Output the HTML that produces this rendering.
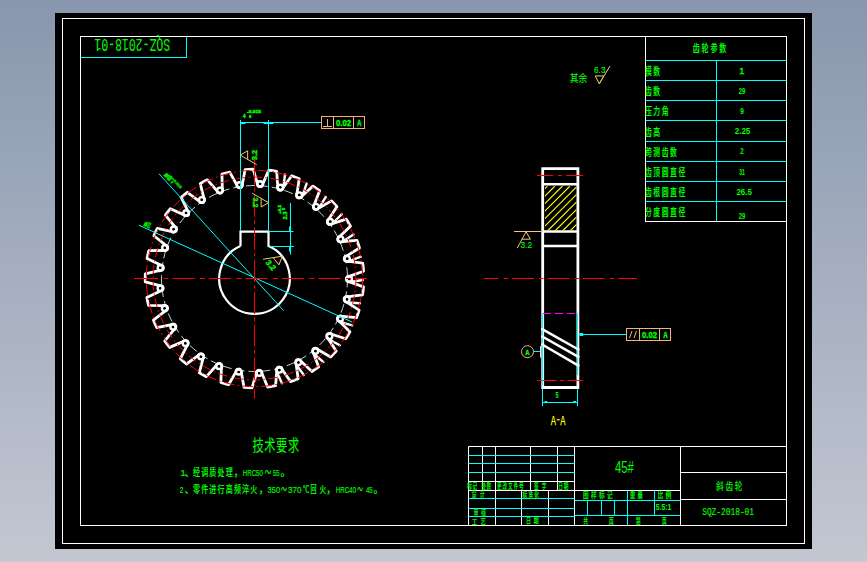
<!DOCTYPE html>
<html lang="zh"><head><meta charset="utf-8"><title>斜齿轮 SQZ-2018-01</title>
<style>html,body{margin:0;padding:0;background:#a5aec2}body{width:867px;height:562px;overflow:hidden}svg{display:block}text{font-family:"Liberation Sans","Noto Sans CJK SC",sans-serif;white-space:pre}text.m{font-family:"Liberation Mono","Noto Sans CJK SC",monospace}</style></head>
<body>
<svg width="867" height="562" viewBox="0 0 867 562">
<defs><linearGradient id="bg" x1="0" y1="0" x2="0" y2="1"><stop offset="0" stop-color="#8897ae"/><stop offset="1" stop-color="#c3c7d2"/></linearGradient></defs>
<rect width="867" height="562" fill="url(#bg)"/>
<rect x="55" y="13" width="757" height="536" fill="#000"/>
<rect x="62.5" y="18.5" width="742" height="525" fill="none" stroke="#fff" stroke-width="1"/>
<rect x="80.5" y="36.5" width="706" height="489" fill="none" stroke="#fff" stroke-width="1"/>
<line x1="81.00" y1="57.50" x2="187.00" y2="57.50" stroke="#00ffff" stroke-width="1" />
<line x1="186.50" y1="36.50" x2="186.50" y2="57.80" stroke="#00ffff" stroke-width="1" />
<text font-size="17.5" fill="#00ff00" font-weight="400" class="m" transform="translate(170.20,39.20) rotate(180) scale(0.657,1)">SQZ-2018-01</text>
<path d="M253.19,169.21 L257.10,182.54 A3.1,4.2 3.4 0 0 263.28,182.90 L268.75,170.13 A109.3,109.3 0 0 1 276.71,171.48 L277.67,185.34 A3.1,4.2 15.8 0 0 283.63,187.03 L291.71,175.73 A109.3,109.3 0 0 1 299.20,178.76 L297.15,192.49 A3.1,4.2 28.2 0 0 302.61,195.43 L312.93,186.13 A109.3,109.3 0 0 1 319.59,190.70 L314.64,203.67 A3.1,4.2 40.6 0 0 319.35,207.71 L331.42,200.85 A109.3,109.3 0 0 1 336.95,206.74 L329.32,218.35 A3.1,4.2 53.1 0 0 333.05,223.31 L346.32,219.20 A109.3,109.3 0 0 1 350.45,226.15 L340.50,235.84 A3.1,4.2 65.5 0 0 343.08,241.48 L356.92,240.33 A109.3,109.3 0 0 1 359.46,248.00 L347.66,255.33 A3.1,4.2 77.9 0 0 348.96,261.39 L362.73,263.23 A109.3,109.3 0 0 1 363.56,271.27 L350.46,275.90 A3.1,4.2 90.3 0 0 350.43,282.10 L363.48,286.86 A109.3,109.3 0 0 1 362.56,294.88 L348.78,296.59 A3.1,4.2 102.7 0 0 347.42,302.63 L359.14,310.09 A109.3,109.3 0 0 1 356.52,317.73 L342.69,316.43 A3.1,4.2 115.1 0 0 340.06,322.04 L349.90,331.84 A109.3,109.3 0 0 1 345.70,338.75 L332.47,334.50 A3.1,4.2 127.5 0 0 328.70,339.42 L336.20,351.11 A109.3,109.3 0 0 1 330.61,356.94 L318.61,349.96 A3.1,4.2 140.0 0 0 313.86,353.94 L318.68,366.97 A109.3,109.3 0 0 1 311.97,371.47 L301.75,362.07 A3.1,4.2 152.4 0 0 296.26,364.94 L298.16,378.70 A109.3,109.3 0 0 1 290.64,381.65 L282.68,370.27 A3.1,4.2 164.8 0 0 276.70,371.90 L275.60,385.74 A109.3,109.3 0 0 1 267.62,387.01 L262.29,374.18 A3.1,4.2 177.2 0 0 256.10,374.49 L252.05,387.77 A109.3,109.3 0 0 1 243.99,387.29 L241.54,373.62 A3.1,4.2 189.6 0 0 235.43,372.59 L228.62,384.69 A109.3,109.3 0 0 1 220.85,382.49 L221.40,368.61 A3.1,4.2 202.0 0 0 215.65,366.29 L206.40,376.65 A109.3,109.3 0 0 1 199.28,372.83 L202.80,359.39 A3.1,4.2 214.4 0 0 197.69,355.88 L186.42,364.01 A109.3,109.3 0 0 1 180.29,358.75 L186.62,346.38 A3.1,4.2 226.8 0 0 182.38,341.86 L169.63,347.38 A109.3,109.3 0 0 1 164.78,340.92 L173.61,330.21 A3.1,4.2 239.3 0 0 170.45,324.88 L156.81,327.52 A109.3,109.3 0 0 1 153.46,320.17 L164.39,311.61 A3.1,4.2 251.7 0 0 162.44,305.72 L148.56,305.38 A109.3,109.3 0 0 1 146.86,297.48 L159.38,291.46 A3.1,4.2 264.1 0 0 158.74,285.30 L145.26,281.97 A109.3,109.3 0 0 1 145.30,273.90 L158.82,270.71 A3.1,4.2 276.5 0 0 159.52,264.55 L147.06,258.41 A109.3,109.3 0 0 1 148.84,250.53 L162.73,250.32 A3.1,4.2 288.9 0 0 164.74,244.46 L153.89,235.78 A109.3,109.3 0 0 1 157.32,228.47 L170.93,231.26 A3.1,4.2 301.3 0 0 174.15,225.96 L165.43,215.15 A109.3,109.3 0 0 1 170.35,208.75 L183.04,214.39 A3.1,4.2 313.7 0 0 187.33,209.92 L181.13,197.49 A109.3,109.3 0 0 1 187.31,192.29 L198.49,200.53 A3.1,4.2 326.2 0 0 203.64,197.08 L200.26,183.61 A109.3,109.3 0 0 1 207.42,179.86 L216.56,190.31 A3.1,4.2 338.6 0 0 222.33,188.05 L221.93,174.17 A109.3,109.3 0 0 1 229.72,172.05 L236.41,184.22 A3.1,4.2 351.0 0 0 242.53,183.25 L245.12,169.60 A109.3,109.3 0 0 1 253.19,169.21Z" fill="none" stroke="#fff" stroke-width="2.8" stroke-linejoin="round"/>
<path d="M257.31,184.07 a2.8,2.8 0 1 0 5.6,0 a2.8,2.8 0 1 0 -5.6,0 M277.48,187.48 a2.8,2.8 0 1 0 5.6,0 a2.8,2.8 0 1 0 -5.6,0 M283.48,187.19 L284.97,174.58 M296.44,195.15 a2.8,2.8 0 1 0 5.6,0 a2.8,2.8 0 1 0 -5.6,0 M302.43,195.55 L306.60,183.56 M313.32,206.72 a2.8,2.8 0 1 0 5.6,0 a2.8,2.8 0 1 0 -5.6,0 M319.14,207.80 L325.79,196.98 M327.31,221.64 a2.8,2.8 0 1 0 5.6,0 a2.8,2.8 0 1 0 -5.6,0 M332.83,223.35 L341.65,214.21 M337.76,239.22 a2.8,2.8 0 1 0 5.6,0 a2.8,2.8 0 1 0 -5.6,0 M342.86,241.47 L353.44,234.45 M344.19,258.64 a2.8,2.8 0 1 0 5.6,0 a2.8,2.8 0 1 0 -5.6,0 M348.75,261.33 L360.59,256.75 M346.30,278.99 a2.8,2.8 0 1 0 5.6,0 a2.8,2.8 0 1 0 -5.6,0 M350.24,282.00 L362.79,280.06 M343.98,299.31 a2.8,2.8 0 1 0 5.6,0 a2.8,2.8 0 1 0 -5.6,0 M347.25,302.49 L359.92,303.30 M337.35,318.67 a2.8,2.8 0 1 0 5.6,0 a2.8,2.8 0 1 0 -5.6,0 M339.92,321.87 L352.12,325.39 M326.71,336.14 a2.8,2.8 0 1 0 5.6,0 a2.8,2.8 0 1 0 -5.6,0 M328.60,339.22 L339.76,345.28 M312.57,350.92 a2.8,2.8 0 1 0 5.6,0 a2.8,2.8 0 1 0 -5.6,0 M313.81,353.73 L323.42,362.04 M295.58,362.31 a2.8,2.8 0 1 0 5.6,0 a2.8,2.8 0 1 0 -5.6,0 M296.26,364.72 L303.84,374.91 M276.54,369.78 a2.8,2.8 0 1 0 5.6,0 a2.8,2.8 0 1 0 -5.6,0 M276.74,371.68 L281.97,383.26 M256.33,372.99 a2.8,2.8 0 1 0 5.6,0 a2.8,2.8 0 1 0 -5.6,0 M235.91,371.77 a2.8,2.8 0 1 0 5.6,0 a2.8,2.8 0 1 0 -5.6,0 M216.23,366.20 a2.8,2.8 0 1 0 5.6,0 a2.8,2.8 0 1 0 -5.6,0 M198.21,356.52 a2.8,2.8 0 1 0 5.6,0 a2.8,2.8 0 1 0 -5.6,0 M182.69,343.20 a2.8,2.8 0 1 0 5.6,0 a2.8,2.8 0 1 0 -5.6,0 M170.39,326.85 a2.8,2.8 0 1 0 5.6,0 a2.8,2.8 0 1 0 -5.6,0 M161.90,308.24 a2.8,2.8 0 1 0 5.6,0 a2.8,2.8 0 1 0 -5.6,0 M157.60,288.24 a2.8,2.8 0 1 0 5.6,0 a2.8,2.8 0 1 0 -5.6,0 M157.71,267.79 a2.8,2.8 0 1 0 5.6,0 a2.8,2.8 0 1 0 -5.6,0 M162.21,247.83 a2.8,2.8 0 1 0 5.6,0 a2.8,2.8 0 1 0 -5.6,0 M170.89,229.31 a2.8,2.8 0 1 0 5.6,0 a2.8,2.8 0 1 0 -5.6,0 M183.36,213.09 a2.8,2.8 0 1 0 5.6,0 a2.8,2.8 0 1 0 -5.6,0 M199.02,199.93 a2.8,2.8 0 1 0 5.6,0 a2.8,2.8 0 1 0 -5.6,0 M217.14,190.44 a2.8,2.8 0 1 0 5.6,0 a2.8,2.8 0 1 0 -5.6,0 M236.88,185.07 a2.8,2.8 0 1 0 5.6,0 a2.8,2.8 0 1 0 -5.6,0" fill="none" stroke="#fff" stroke-width="2.4" stroke-linecap="round"/>
<circle cx="254.5" cy="278.5" r="93" fill="none" stroke="#fff" stroke-width="0.9" stroke-dasharray="9 4" opacity="0.9"/>
<circle cx="254.5" cy="278.5" r="108.2" fill="none" stroke="#ff0000" stroke-width="1" stroke-dasharray="11 3 2 3"/>
<circle cx="254.5" cy="278.5" r="101.4" fill="none" stroke="#ff0000" stroke-width="1" stroke-dasharray="9 3 2 3"/>
<path d="M240.50,246.09 L240.50,231.6 L268.50,231.6 L268.50,246.09 A35.3,35.3 0 1 1 240.50,246.09" fill="none" stroke="#fff" stroke-width="2.2" stroke-linejoin="miter"/>
<line x1="159.00" y1="173.80" x2="283.50" y2="310.50" stroke="#00ffff" stroke-width="1" />
<line x1="138.80" y1="225.20" x2="352.00" y2="322.00" stroke="#00ffff" stroke-width="1" />
<line x1="134.00" y1="278.50" x2="137.00" y2="278.50" stroke="#ff0000" stroke-width="1" />
<line x1="136.00" y1="278.50" x2="367.00" y2="278.50" stroke="#ff0000" stroke-width="1" stroke-dasharray="22 5.5 5 4"/>
<line x1="254.50" y1="159.30" x2="254.50" y2="163.00" stroke="#ff0000" stroke-width="1" />
<line x1="254.50" y1="162.60" x2="254.50" y2="398.50" stroke="#ff0000" stroke-width="1" stroke-dasharray="22 3.3 3.8 3.3"/>
<line x1="240.50" y1="120.00" x2="240.50" y2="231.00" stroke="#00ffff" stroke-width="1" />
<line x1="268.50" y1="120.00" x2="268.50" y2="231.00" stroke="#00ffff" stroke-width="1" />
<line x1="240.50" y1="122.50" x2="321.00" y2="122.50" stroke="#00ffff" stroke-width="1" />
<line x1="241.00" y1="123.50" x2="245.50" y2="123.50" stroke="#00ffff" stroke-width="1" />
<line x1="263.50" y1="123.50" x2="268.00" y2="123.50" stroke="#00ffff" stroke-width="1" />
<line x1="269.00" y1="123.50" x2="273.50" y2="123.50" stroke="#00ffff" stroke-width="1" />
<text x="243.00" y="118.30" font-size="4.5" fill="#00ff00" font-weight="700" stroke="#00ff00" stroke-width="0.35" >4</text>
<text x="249.00" y="118.30" font-size="4" fill="#00ff00" font-weight="700" stroke="#00ff00" stroke-width="0.35" >0</text>
<text x="247.00" y="113.20" font-size="4" fill="#00ff00" font-weight="700" textLength="14.00" lengthAdjust="spacingAndGlyphs" stroke="#00ff00" stroke-width="0.35" >-0.015</text>
<rect x="321.5" y="116.5" width="43" height="12" fill="none" stroke="#f0b478" stroke-width="1"/>
<line x1="333.50" y1="116.50" x2="333.50" y2="128.50" stroke="#f0b478" stroke-width="1" />
<line x1="353.50" y1="116.50" x2="353.50" y2="128.50" stroke="#f0b478" stroke-width="1" />
<line x1="327.50" y1="119.00" x2="327.50" y2="126.50" stroke="#f0b478" stroke-width="1" />
<line x1="323.00" y1="126.50" x2="332.00" y2="126.50" stroke="#f0b478" stroke-width="1" />
<text x="336.00" y="126.00" font-size="8.5" fill="#00ff00" font-weight="700" textLength="15.00" lengthAdjust="spacingAndGlyphs" stroke="#00ff00" stroke-width="0.35" >0.02</text>
<text x="357.00" y="126.00" font-size="8.5" fill="#00ff00" font-weight="700" textLength="4.50" lengthAdjust="spacingAndGlyphs" stroke="#00ff00" stroke-width="0.35" >A</text>
<path d="M247.65,150.80 L240.20,155.10 L256.65,164.60 M247.65,150.80 L247.65,159.40" fill="none" stroke="#f0c878" stroke-width="1"/>
<text x="0.00" y="0.00" font-size="8" fill="#00ff00" font-weight="700" textLength="10.50" lengthAdjust="spacingAndGlyphs" transform="translate(257,160.3) rotate(-90)" stroke="#00ff00" stroke-width="0.35" >3.2</text>
<path d="M261.15,207.00 L268.60,202.70 L252.15,193.20 M261.15,207.00 L261.15,198.40" fill="none" stroke="#f0c878" stroke-width="1"/>
<text x="0.00" y="0.00" font-size="8" fill="#00ff00" font-weight="700" textLength="10.00" lengthAdjust="spacingAndGlyphs" transform="translate(252.6,197.5) rotate(90)" stroke="#00ff00" stroke-width="0.35" >3.2</text>
<path d="M278.97,264.88 L282.30,256.20 L263.04,259.25 M278.97,264.88 L273.11,257.65" fill="none" stroke="#f0c878" stroke-width="1"/>
<text x="0.00" y="0.00" font-size="8" fill="#00ff00" font-weight="700" textLength="11.00" lengthAdjust="spacingAndGlyphs" transform="translate(265.3,262.8) rotate(50)" stroke="#00ff00" stroke-width="0.35" >3.2</text>
<line x1="290.50" y1="203.00" x2="290.50" y2="254.60" stroke="#00ffff" stroke-width="1" />
<line x1="268.50" y1="231.50" x2="293.50" y2="231.50" stroke="#00ffff" stroke-width="1" />
<line x1="269.50" y1="246.50" x2="294.00" y2="246.50" stroke="#00ffff" stroke-width="1" />
<line x1="289.50" y1="226.50" x2="289.50" y2="231.00" stroke="#00ffff" stroke-width="1" />
<line x1="289.50" y1="247.00" x2="289.50" y2="251.50" stroke="#00ffff" stroke-width="1" />
<text x="0.00" y="0.00" font-size="5" fill="#00ff00" font-weight="700" textLength="8.00" lengthAdjust="spacingAndGlyphs" transform="translate(286.5,219.5) rotate(-90)" stroke="#00ff00" stroke-width="0.35" >2.3</text>
<text x="0.00" y="0.00" font-size="4" fill="#00ff00" font-weight="700" textLength="9.00" lengthAdjust="spacingAndGlyphs" transform="translate(280.5,214) rotate(-90)" stroke="#00ff00" stroke-width="0.35" >+0.1</text>
<text x="0.00" y="0.00" font-size="4" fill="#00ff00" font-weight="700" transform="translate(285,210) rotate(-90)" stroke="#00ff00" stroke-width="0.35" >0</text>
<text x="0.00" y="0.00" font-size="7.5" fill="#00ff00" font-weight="700" textLength="8.50" lengthAdjust="spacingAndGlyphs" transform="translate(163.4,175.3) rotate(47.7)" stroke="#00ff00" stroke-width="0.35" >ø8</text>
<text x="0.00" y="0.00" font-size="3.6" fill="#00ff00" font-weight="700" textLength="13.00" lengthAdjust="spacingAndGlyphs" transform="translate(171.5,179.2) rotate(47.7)" stroke="#00ff00" stroke-width="0.2" >+0.015</text>
<text x="0.00" y="0.00" font-size="3.6" fill="#00ff00" font-weight="700" transform="translate(170.3,182.6) rotate(47.7)" stroke="#00ff00" stroke-width="0.2" >0</text>
<text x="0.00" y="0.00" font-size="8" fill="#00ff00" font-weight="700" textLength="3.60" lengthAdjust="spacingAndGlyphs" transform="translate(143.3,225.6) rotate(24.4)" stroke="#00ff00" stroke-width="0.35" >ø</text>
<text x="0.00" y="0.00" font-size="8" fill="#00ff00" font-weight="700" textLength="3.20" lengthAdjust="spacingAndGlyphs" transform="translate(146.5,227) rotate(24.4)" stroke="#00ff00" stroke-width="0.35" >31</text>
<path d="M542.7,387.5 L542.7,168.7 L577.9,168.7 L577.9,387.5 Z" fill="none" stroke="#fff" stroke-width="2.8"/>
<line x1="543.00" y1="184.20" x2="578.00" y2="184.20" stroke="#fff" stroke-width="2.5" />
<line x1="543.00" y1="231.60" x2="578.00" y2="231.60" stroke="#fff" stroke-width="2.5" />
<line x1="543.00" y1="245.90" x2="578.00" y2="245.90" stroke="#fff" stroke-width="2.5" />
<clipPath id="hc"><rect x="545" y="186.3" width="31.5" height="44.2"/></clipPath>
<path d="M495.0,231 L540.0,186 M502.5,231 L547.5,186 M510.0,231 L555.0,186 M517.5,231 L562.5,186 M525.0,231 L570.0,186 M532.5,231 L577.5,186 M540.0,231 L585.0,186 M547.5,231 L592.5,186 M555.0,231 L600.0,186 M562.5,231 L607.5,186 M570.0,231 L615.0,186 M577.5,231 L622.5,186" stroke="#ffff00" stroke-width="1.2" clip-path="url(#hc)" fill="none"/>
<line x1="537.00" y1="175.50" x2="583.20" y2="175.50" stroke="#ff0000" stroke-width="1" stroke-dasharray="16 5 4 4.2 17"/>
<line x1="483.70" y1="278.50" x2="637.00" y2="278.50" stroke="#ff0000" stroke-width="1" stroke-dasharray="22 5 4.4 4" stroke-dashoffset="7"/>
<line x1="536.80" y1="380.50" x2="583.30" y2="380.50" stroke="#ff0000" stroke-width="1" stroke-dasharray="20 3.3 4 3.3 16"/>
<line x1="543.00" y1="313.50" x2="578.00" y2="313.50" stroke="#ff00ff" stroke-width="1" stroke-dasharray="8 4"/>
<line x1="542.50" y1="313.50" x2="542.50" y2="385.00" stroke="#00ffff" stroke-width="1" />
<line x1="577.50" y1="313.50" x2="577.50" y2="375.00" stroke="#00ffff" stroke-width="1" />
<line x1="577.50" y1="389.00" x2="577.50" y2="406.00" stroke="#00ffff" stroke-width="1" />
<line x1="542.50" y1="389.00" x2="542.50" y2="406.00" stroke="#00ffff" stroke-width="1" />
<line x1="541.30" y1="328.60" x2="579.30" y2="350.00" stroke="#fff" stroke-width="2.5" />
<line x1="541.30" y1="336.00" x2="579.30" y2="357.40" stroke="#fff" stroke-width="2.5" />
<line x1="541.30" y1="344.00" x2="579.30" y2="366.20" stroke="#fff" stroke-width="2.5" />
<line x1="542.50" y1="402.50" x2="577.50" y2="402.50" stroke="#00ffff" stroke-width="1" />
<line x1="544.50" y1="401.50" x2="547.20" y2="401.50" stroke="#00ffff" stroke-width="1" />
<line x1="573.00" y1="401.50" x2="576.00" y2="401.50" stroke="#00ffff" stroke-width="1" />
<text x="555.60" y="398.00" font-size="8.2" fill="#00ff00" font-weight="700" textLength="3.00" lengthAdjust="spacingAndGlyphs" >5</text>
<text x="550.70" y="424.60" font-size="13" fill="#ffff00" font-weight="400" textLength="5.20" lengthAdjust="spacingAndGlyphs" stroke="#ffff00" stroke-width="0.25" >A</text>
<text x="556.60" y="423.20" font-size="13" fill="#ffff00" font-weight="400" textLength="3.20" lengthAdjust="spacingAndGlyphs" stroke="#ffff00" stroke-width="0.25" >-</text>
<text x="560.20" y="424.60" font-size="13" fill="#ffff00" font-weight="400" textLength="5.20" lengthAdjust="spacingAndGlyphs" stroke="#ffff00" stroke-width="0.25" >A</text>
<line x1="514.00" y1="231.50" x2="543.00" y2="231.50" stroke="#f0c878" stroke-width="1" />
<path d="M526,231.8 L530.4,239.2 L521.7,239.2 M526,231.8 L517.3,248" fill="none" stroke="#f0c878" stroke-width="1"/>
<text x="520.50" y="248.00" font-size="9" fill="#00ff00" font-weight="400" textLength="11.50" lengthAdjust="spacingAndGlyphs" stroke="#00ff00" stroke-width="0.1" >3.2</text>
<circle cx="527.5" cy="351.7" r="6" fill="none" stroke="#f0b478" stroke-width="1"/>
<line x1="533.50" y1="351.50" x2="540.00" y2="351.50" stroke="#00ffff" stroke-width="1" />
<line x1="540.50" y1="346.00" x2="540.50" y2="357.70" stroke="#e4e4e4" stroke-width="1" />
<text x="525.30" y="354.80" font-size="7.5" fill="#00ff00" font-weight="700" textLength="4.20" lengthAdjust="spacingAndGlyphs" stroke="#00ff00" stroke-width="0.35" >A</text>
<rect x="626.5" y="328.5" width="44" height="12" fill="none" stroke="#f0b478" stroke-width="1"/>
<line x1="639.50" y1="328.50" x2="639.50" y2="340.50" stroke="#f0b478" stroke-width="1" />
<line x1="659.50" y1="328.50" x2="659.50" y2="340.50" stroke="#f0b478" stroke-width="1" />
<line x1="629.50" y1="338.00" x2="632.00" y2="331.00" stroke="#f0b478" stroke-width="1" />
<line x1="634.00" y1="338.00" x2="636.50" y2="331.00" stroke="#f0b478" stroke-width="1" />
<text x="642.00" y="338.00" font-size="8.5" fill="#00ff00" font-weight="700" textLength="15.00" lengthAdjust="spacingAndGlyphs" stroke="#00ff00" stroke-width="0.35" >0.02</text>
<text x="663.20" y="338.00" font-size="8.5" fill="#00ff00" font-weight="700" textLength="4.50" lengthAdjust="spacingAndGlyphs" stroke="#00ff00" stroke-width="0.35" >A</text>
<line x1="579.00" y1="334.50" x2="626.30" y2="334.50" stroke="#00ffff" stroke-width="1" />
<rect x="579.6" y="333" width="3.6" height="3" fill="#00ffff"/>
<text x="569.80" y="82.00" font-size="10.5" fill="#00ff00" font-weight="400" textLength="17.60" lengthAdjust="spacingAndGlyphs" stroke="#00ff00" stroke-width="0.1" >其余</text>
<text x="594.00" y="72.80" font-size="9" fill="#00ff00" font-weight="400" textLength="11.50" lengthAdjust="spacingAndGlyphs" stroke="#00ff00" stroke-width="0.1" >6.3</text>
<path d="M595.2,75.9 L603.8,75.9 L599.3,83.7 L595.2,75.9 M599.3,83.7 L610,66" fill="none" stroke="#f0c878" stroke-width="1"/>
<line x1="645.50" y1="36.50" x2="645.50" y2="221.50" stroke="#fff" stroke-width="1" />
<line x1="645.00" y1="221.50" x2="786.50" y2="221.50" stroke="#fff" stroke-width="1" />
<line x1="645.40" y1="60.50" x2="786.50" y2="60.50" stroke="#00ffff" stroke-width="1" />
<line x1="645.40" y1="80.50" x2="786.50" y2="80.50" stroke="#00ffff" stroke-width="1" />
<line x1="645.40" y1="100.50" x2="786.50" y2="100.50" stroke="#00ffff" stroke-width="1" />
<line x1="645.40" y1="120.50" x2="786.50" y2="120.50" stroke="#00ffff" stroke-width="1" />
<line x1="645.40" y1="141.50" x2="786.50" y2="141.50" stroke="#00ffff" stroke-width="1" />
<line x1="645.40" y1="161.50" x2="786.50" y2="161.50" stroke="#00ffff" stroke-width="1" />
<line x1="645.40" y1="181.50" x2="786.50" y2="181.50" stroke="#00ffff" stroke-width="1" />
<line x1="645.40" y1="201.50" x2="786.50" y2="201.50" stroke="#00ffff" stroke-width="1" />
<line x1="716.50" y1="60.70" x2="716.50" y2="221.50" stroke="#00ffff" stroke-width="1" />
<text font-size="10.5" fill="#00ff00" font-weight="500" letter-spacing="2.70" transform="translate(692.80,51.80) scale(0.667,1)" stroke="#00ff00" stroke-width="0.2">齿轮参数</text>
<text font-size="10.8" fill="#00ff00" font-weight="500" letter-spacing="2.46" transform="translate(645.00,75.00) scale(0.630,1)" stroke="#00ff00" stroke-width="0.2">模数</text>
<text x="739.30" y="73.80" font-size="9.2" fill="#00ff00" font-weight="400" stroke="#00ff00" stroke-width="0.35" >1</text>
<text font-size="10.8" fill="#00ff00" font-weight="500" letter-spacing="2.46" transform="translate(645.00,94.80) scale(0.630,1)" stroke="#00ff00" stroke-width="0.2">齿数</text>
<text x="738.70" y="94.00" font-size="9.2" fill="#00ff00" font-weight="700" textLength="6.60" lengthAdjust="spacingAndGlyphs" >29</text>
<text font-size="10.8" fill="#00ff00" font-weight="500" letter-spacing="2.46" transform="translate(645.00,114.80) scale(0.630,1)" stroke="#00ff00" stroke-width="0.2">压力角</text>
<text x="740.20" y="114.00" font-size="9.2" fill="#00ff00" font-weight="700" textLength="3.60" lengthAdjust="spacingAndGlyphs" >9</text>
<text font-size="10.8" fill="#00ff00" font-weight="500" letter-spacing="2.46" transform="translate(645.00,135.80) scale(0.630,1)" stroke="#00ff00" stroke-width="0.2">齿高</text>
<text x="734.75" y="134.20" font-size="9.2" fill="#00ff00" font-weight="700" textLength="15.50" lengthAdjust="spacingAndGlyphs" >2.25</text>
<text font-size="10.8" fill="#00ff00" font-weight="500" letter-spacing="2.46" transform="translate(645.00,155.80) scale(0.630,1)" stroke="#00ff00" stroke-width="0.2">跨测齿数</text>
<text x="740.30" y="153.50" font-size="9.2" fill="#00ff00" font-weight="700" textLength="3.40" lengthAdjust="spacingAndGlyphs" >2</text>
<text font-size="10.8" fill="#00ff00" font-weight="500" letter-spacing="2.46" transform="translate(645.00,176.30) scale(0.630,1)" stroke="#00ff00" stroke-width="0.2">齿顶圆直径</text>
<text x="739.20" y="174.60" font-size="9.2" fill="#00ff00" font-weight="700" textLength="5.60" lengthAdjust="spacingAndGlyphs" >31</text>
<text font-size="10.8" fill="#00ff00" font-weight="500" letter-spacing="2.46" transform="translate(645.00,196.30) scale(0.630,1)" stroke="#00ff00" stroke-width="0.2">齿根圆直径</text>
<text x="736.45" y="195.00" font-size="9.2" fill="#00ff00" font-weight="700" textLength="15.50" lengthAdjust="spacingAndGlyphs" >26.5</text>
<text font-size="10.8" fill="#00ff00" font-weight="500" letter-spacing="2.46" transform="translate(645.00,216.30) scale(0.630,1)" stroke="#00ff00" stroke-width="0.2">分度圆直径</text>
<text x="738.70" y="219.30" font-size="9.2" fill="#00ff00" font-weight="700" textLength="6.60" lengthAdjust="spacingAndGlyphs" >29</text>
<line x1="468.40" y1="446.50" x2="786.50" y2="446.50" stroke="#fff" stroke-width="1" />
<line x1="468.50" y1="446.50" x2="468.50" y2="490.30" stroke="#fff" stroke-width="1" />
<line x1="482.50" y1="446.50" x2="482.50" y2="490.30" stroke="#fff" stroke-width="1" />
<line x1="495.50" y1="446.50" x2="495.50" y2="490.30" stroke="#fff" stroke-width="1" />
<line x1="530.50" y1="446.50" x2="530.50" y2="490.30" stroke="#fff" stroke-width="1" />
<line x1="557.50" y1="446.50" x2="557.50" y2="490.30" stroke="#fff" stroke-width="1" />
<line x1="574.50" y1="446.50" x2="574.50" y2="525.50" stroke="#fff" stroke-width="1" />
<line x1="468.40" y1="455.50" x2="574.70" y2="455.50" stroke="#00ffff" stroke-width="1" />
<line x1="468.40" y1="463.50" x2="574.70" y2="463.50" stroke="#00ffff" stroke-width="1" />
<line x1="468.40" y1="472.50" x2="574.70" y2="472.50" stroke="#00ffff" stroke-width="1" />
<line x1="468.40" y1="481.50" x2="574.70" y2="481.50" stroke="#fff" stroke-width="1" />
<line x1="468.40" y1="490.50" x2="680.50" y2="490.50" stroke="#fff" stroke-width="1" />
<line x1="468.50" y1="490.30" x2="468.50" y2="525.50" stroke="#fff" stroke-width="1" />
<line x1="495.50" y1="490.30" x2="495.50" y2="525.50" stroke="#fff" stroke-width="1" />
<line x1="521.50" y1="490.30" x2="521.50" y2="525.50" stroke="#fff" stroke-width="1" />
<line x1="548.50" y1="490.30" x2="548.50" y2="525.50" stroke="#fff" stroke-width="1" />
<line x1="468.40" y1="498.50" x2="574.70" y2="498.50" stroke="#00ffff" stroke-width="1" />
<line x1="468.40" y1="508.50" x2="574.70" y2="508.50" stroke="#00ffff" stroke-width="1" />
<line x1="468.40" y1="516.50" x2="574.70" y2="516.50" stroke="#00ffff" stroke-width="1" />
<line x1="680.50" y1="446.50" x2="680.50" y2="525.50" stroke="#fff" stroke-width="1" />
<line x1="680.50" y1="472.50" x2="786.50" y2="472.50" stroke="#fff" stroke-width="1" />
<line x1="680.50" y1="499.50" x2="786.50" y2="499.50" stroke="#fff" stroke-width="1" />
<line x1="574.70" y1="500.50" x2="680.50" y2="500.50" stroke="#00ffff" stroke-width="1" />
<line x1="574.70" y1="515.50" x2="680.50" y2="515.50" stroke="#00ffff" stroke-width="1" />
<line x1="627.50" y1="490.30" x2="627.50" y2="525.50" stroke="#00ffff" stroke-width="1" />
<line x1="654.50" y1="490.30" x2="654.50" y2="515.20" stroke="#00ffff" stroke-width="1" />
<line x1="587.50" y1="500.60" x2="587.50" y2="515.20" stroke="#00ffff" stroke-width="1" />
<line x1="601.50" y1="500.60" x2="601.50" y2="515.20" stroke="#00ffff" stroke-width="1" />
<line x1="614.50" y1="500.60" x2="614.50" y2="515.20" stroke="#00ffff" stroke-width="1" />
<text font-size="7.8" fill="#00ff00" font-weight="500" letter-spacing="1.02" transform="translate(467.30,488.60) scale(0.590,1)" stroke="#00ff00" stroke-width="0.15">标记</text>
<text font-size="7.8" fill="#00ff00" font-weight="500" letter-spacing="0.68" transform="translate(481.40,488.60) scale(0.590,1)" stroke="#00ff00" stroke-width="0.15">处数</text>
<text font-size="7.8" fill="#00ff00" font-weight="500" letter-spacing="1.53" transform="translate(496.90,488.60) scale(0.590,1)" stroke="#00ff00" stroke-width="0.15">更改文件号</text>
<text font-size="7.8" fill="#00ff00" font-weight="500" letter-spacing="5.43" transform="translate(534.00,488.60) scale(0.590,1)" stroke="#00ff00" stroke-width="0.15">签字</text>
<text font-size="7.8" fill="#00ff00" font-weight="500" letter-spacing="1.53" transform="translate(558.20,488.60) scale(0.590,1)" stroke="#00ff00" stroke-width="0.15">日期</text>
<text font-size="7.8" fill="#00ff00" font-weight="500" letter-spacing="6.10" transform="translate(471.70,497.40) scale(0.590,1)" stroke="#00ff00" stroke-width="0.15">设计</text>
<text font-size="7.8" fill="#00ff00" font-weight="500" letter-spacing="2.20" transform="translate(522.50,497.60) scale(0.590,1)" stroke="#00ff00" stroke-width="0.15">标准化</text>
<text font-size="7.8" fill="#00ff00" font-weight="500" letter-spacing="4.75" transform="translate(473.80,515.00) scale(0.590,1)" stroke="#00ff00" stroke-width="0.15">审核</text>
<text font-size="7.2" fill="#00ff00" font-weight="500" letter-spacing="4.71" transform="translate(472.00,524.00) scale(0.722,1)" stroke="#00ff00" stroke-width="0.15">工艺</text>
<text font-size="7.4" fill="#00ff00" font-weight="500" letter-spacing="4.14" transform="translate(526.00,522.60) scale(0.676,1)" stroke="#00ff00" stroke-width="0.15">日期</text>
<text font-size="8" fill="#00ff00" font-weight="500" letter-spacing="3.43" transform="translate(583.00,498.20) scale(0.700,1)" stroke="#00ff00" stroke-width="0.15">图样标记</text>
<text font-size="7.8" fill="#00ff00" font-weight="500" letter-spacing="2.65" transform="translate(629.80,498.30) scale(0.718,1)" stroke="#00ff00" stroke-width="0.15">重量</text>
<text font-size="7.8" fill="#00ff00" font-weight="500" letter-spacing="2.96" transform="translate(657.60,498.30) scale(0.744,1)" stroke="#00ff00" stroke-width="0.15">比例</text>
<text x="655.70" y="510.20" font-size="8.4" fill="#00ff00" font-weight="700" textLength="15.70" lengthAdjust="spacingAndGlyphs" >5.5:1</text>
<text font-size="7.6" fill="#00ff00" font-weight="500" letter-spacing="1.90" transform="translate(583.30,523.80) scale(0.632,1)" stroke="#00ff00" stroke-width="0.15">共</text>
<text font-size="7.6" fill="#00ff00" font-weight="500" letter-spacing="1.52" transform="translate(608.80,523.80) scale(0.658,1)" stroke="#00ff00" stroke-width="0.15">页</text>
<text font-size="7.6" fill="#00ff00" font-weight="500" letter-spacing="1.52" transform="translate(635.70,523.80) scale(0.658,1)" stroke="#00ff00" stroke-width="0.15">第</text>
<text font-size="7.6" fill="#00ff00" font-weight="500" letter-spacing="1.52" transform="translate(661.80,523.80) scale(0.658,1)" stroke="#00ff00" stroke-width="0.15">页</text>
<text x="615.00" y="473.00" font-size="16" fill="#00ff00" font-weight="400" textLength="18.70" lengthAdjust="spacingAndGlyphs" >45#</text>
<text font-size="10.8" fill="#00ff00" font-weight="400" letter-spacing="2.56" transform="translate(716.00,490.30) scale(0.704,1)" stroke="#00ff00" stroke-width="0.15">斜齿轮</text>
<text font-size="11" fill="#00ff00" font-weight="400" class="m" transform="translate(702.20,514.50) rotate(0) scale(0.715,1)" stroke="#00ff00" stroke-width="0.15">SQZ-2018-01</text>
<text font-size="15.5" fill="#00ff00" font-weight="400" letter-spacing="0.83" transform="translate(252.50,450.60) scale(0.723,1)" stroke="#00ff00" stroke-width="0.1">技术要求</text>
<text x="180.30" y="476.30" font-size="9.8" fill="#00ff00" font-weight="500" stroke="#00ff00" stroke-width="0.15" >1</text>
<text x="184.50" y="476.30" font-size="9.8" fill="#00ff00" font-weight="500" stroke="#00ff00" stroke-width="0.15" >、</text>
<text font-size="9.8" fill="#00ff00" font-weight="500" letter-spacing="1.68" transform="translate(193.00,476.30) scale(0.714,1)" stroke="#00ff00" stroke-width="0.12">经调质处理</text>
<text x="233.50" y="476.30" font-size="9.8" fill="#00ff00" font-weight="500" stroke="#00ff00" stroke-width="0.15" >，</text>
<text x="242.80" y="476.30" font-size="9.8" fill="#00ff00" font-weight="500" textLength="20.10" lengthAdjust="spacingAndGlyphs" stroke="#00ff00" stroke-width="0.15" >HRC50</text>
<text x="264.80" y="476.30" font-size="9.8" fill="#00ff00" font-weight="500" textLength="6.40" lengthAdjust="spacingAndGlyphs" stroke="#00ff00" stroke-width="0.15" >～</text>
<text x="273.00" y="476.30" font-size="9.8" fill="#00ff00" font-weight="500" textLength="6.60" lengthAdjust="spacingAndGlyphs" stroke="#00ff00" stroke-width="0.15" >55</text>
<text x="280.50" y="476.30" font-size="9.8" fill="#00ff00" font-weight="500" stroke="#00ff00" stroke-width="0.15" >。</text>
<text x="179.80" y="492.60" font-size="9.8" fill="#00ff00" font-weight="500" textLength="3.60" lengthAdjust="spacingAndGlyphs" stroke="#00ff00" stroke-width="0.15" >2</text>
<text x="184.50" y="492.60" font-size="9.8" fill="#00ff00" font-weight="500" stroke="#00ff00" stroke-width="0.15" >、</text>
<text font-size="9.8" fill="#00ff00" font-weight="500" letter-spacing="1.68" transform="translate(193.00,492.60) scale(0.714,1)" stroke="#00ff00" stroke-width="0.12">零件进行高频淬火</text>
<text x="258.50" y="492.60" font-size="9.8" fill="#00ff00" font-weight="500" stroke="#00ff00" stroke-width="0.15" >，</text>
<text x="267.50" y="492.60" font-size="9.8" fill="#00ff00" font-weight="500" textLength="12.60" lengthAdjust="spacingAndGlyphs" stroke="#00ff00" stroke-width="0.15" >350</text>
<text x="281.00" y="492.60" font-size="9.8" fill="#00ff00" font-weight="500" textLength="5.80" lengthAdjust="spacingAndGlyphs" stroke="#00ff00" stroke-width="0.15" >～</text>
<text x="288.00" y="492.60" font-size="9.8" fill="#00ff00" font-weight="500" textLength="13.60" lengthAdjust="spacingAndGlyphs" stroke="#00ff00" stroke-width="0.15" >370</text>
<text x="303.00" y="492.60" font-size="9.8" fill="#00ff00" font-weight="500" textLength="6.20" lengthAdjust="spacingAndGlyphs" stroke="#00ff00" stroke-width="0.15" >℃</text>
<text x="310.60" y="492.60" font-size="9.8" fill="#00ff00" font-weight="500" textLength="6.00" lengthAdjust="spacingAndGlyphs" stroke="#00ff00" stroke-width="0.15" >回</text>
<text x="319.60" y="492.60" font-size="9.8" fill="#00ff00" font-weight="500" textLength="6.60" lengthAdjust="spacingAndGlyphs" stroke="#00ff00" stroke-width="0.15" >火</text>
<text x="326.00" y="492.60" font-size="9.8" fill="#00ff00" font-weight="500" stroke="#00ff00" stroke-width="0.15" >，</text>
<text x="335.70" y="492.60" font-size="9.8" fill="#00ff00" font-weight="500" textLength="20.30" lengthAdjust="spacingAndGlyphs" stroke="#00ff00" stroke-width="0.15" >HRC40</text>
<text x="357.30" y="492.60" font-size="9.8" fill="#00ff00" font-weight="500" textLength="5.60" lengthAdjust="spacingAndGlyphs" stroke="#00ff00" stroke-width="0.15" >～</text>
<text x="366.00" y="492.60" font-size="9.8" fill="#00ff00" font-weight="500" textLength="6.70" lengthAdjust="spacingAndGlyphs" stroke="#00ff00" stroke-width="0.15" >45</text>
<text x="373.50" y="492.60" font-size="9.8" fill="#00ff00" font-weight="500" stroke="#00ff00" stroke-width="0.15" >。</text>
</svg>
</body></html>
